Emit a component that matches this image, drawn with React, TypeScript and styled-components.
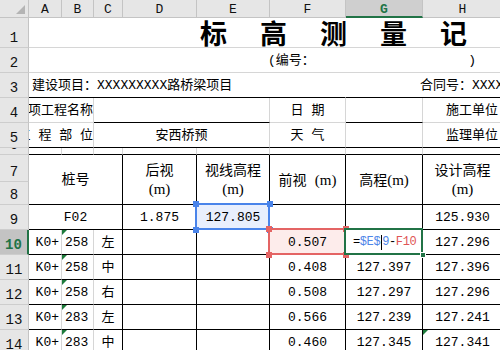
import React from 'react';
import styled, { createGlobalStyle, css } from 'styled-components';

const Global = createGlobalStyle`
  html, body { margin: 0; padding: 0; background: #fff; overflow: hidden; }
  body { width: 500px; height: 350px; }
`;

const GRID = '#d6d6d6';
const HEAD_BG = '#e6e6e6';
const HEAD_LINE = '#c4c4c4';
const XL_GREEN = '#217346';
const SEL_BLUE = '#4a84ea';
const SEL_RED = '#e46464';

type Line = 'k' | 'g' | 'n';
type Sel = 'blue' | 'red' | 'green';
const lineColor = (l?: Line) => (l === 'k' ? '#000' : l === 'n' ? 'transparent' : GRID);
const selColor = (s: Sel) => (s === 'blue' ? SEL_BLUE : s === 'red' ? SEL_RED : XL_GREEN);
const selBg = (s: Sel) => (s === 'blue' ? '#e9effd' : s === 'red' ? '#fdeceb' : '#fff');

const Sheet = styled.div`
  display: grid;
  grid-template-columns: 29px 33px 32px 29px 74px 73px 76px 77px 80px;
  grid-template-rows: 18px 30px 25px 25px 25px 25px 7px 27px 23px repeat(6, 25px);
  width: 500px;
  height: 350px;
  overflow: hidden;
  font-family: "Liberation Mono", "Noto Sans CJK SC", monospace;
  color: #000;
`;

const Corner = styled.div`
  grid-column: 1;
  grid-row: 1;
  background: ${HEAD_BG};
  border-right: 1px solid ${HEAD_LINE};
  border-bottom: 1px solid ${HEAD_LINE};
  box-sizing: border-box;
  position: relative;
  &::after {
    content: '';
    position: absolute;
    right: 3px;
    bottom: 3px;
    border-left: 9px solid transparent;
    border-bottom: 9px solid #b4b4b4;
  }
`;

const ColHead = styled.div<{ $c: number; $active?: boolean }>`
  grid-column: ${p => p.$c};
  grid-row: 1;
  box-sizing: border-box;
  background: ${p => (p.$active ? '#cfcfcf' : HEAD_BG)};
  border-right: 1px solid ${HEAD_LINE};
  border-bottom: ${p => (p.$active ? `2px solid ${XL_GREEN}` : `1px solid ${HEAD_LINE}`)};
  color: ${p => (p.$active ? XL_GREEN : '#111')};
  font-weight: ${p => (p.$active ? 700 : 400)};
  font-family: "Liberation Mono", monospace;
  font-size: 13px;
  display: flex;
  align-items: center;
  justify-content: center;
  padding-top: 2px;
`;

const RowHead = styled.div<{ $r: number; $active?: boolean }>`
  grid-column: 1;
  grid-row: ${p => p.$r};
  box-sizing: border-box;
  background: ${p => (p.$active ? '#c3c3c3' : HEAD_BG)};
  border-bottom: 1px solid #cdcdcd;
  border-right: ${p => (p.$active ? `2px solid ${XL_GREEN}` : `1px solid ${HEAD_LINE}`)};
  color: ${p => (p.$active ? XL_GREEN : '#111')};
  font-weight: ${p => (p.$active ? 700 : 400)};
  font-family: "Liberation Mono", monospace;
  font-size: 14px;
  line-height: 1;
  display: flex;
  align-items: flex-end;
  justify-content: center;
  padding-bottom: 2px;
  overflow: hidden;
`;

const Cell = styled.div<{
  $c: string;
  $r: string;
  $br?: Line;
  $bb?: Line;
  $al?: 'left' | 'center' | 'right';
  $fs?: number;
  $pl?: number;
  $pr?: number;
  $sel?: Sel;
  $col?: boolean;
}>`
  grid-column: ${p => p.$c};
  grid-row: ${p => p.$r};
  box-sizing: border-box;
  border-right: 1px solid ${p => lineColor(p.$br)};
  border-bottom: 1px solid ${p => lineColor(p.$bb)};
  display: flex;
  flex-direction: ${p => (p.$col ? 'column' : 'row')};
  align-items: center;
  justify-content: ${p => (p.$al === 'left' ? 'flex-start' : p.$al === 'right' ? 'flex-end' : 'center')};
  padding: ${p => (p.$col ? 2 : 0)}px ${p => p.$pr ?? 0}px 0 ${p => p.$pl ?? 0}px;
  font-size: ${p => p.$fs ?? 13}px;
  line-height: ${p => (p.$col ? '18px' : '1')};
  white-space: nowrap;
  overflow: hidden;
  position: relative;
  min-width: 0;
  ${p =>
    p.$sel &&
    css`
      overflow: visible;
      z-index: ${p.$sel === 'green' ? 3 : 2};
      background: ${selBg(p.$sel)};
      &::after {
        content: '';
        position: absolute;
        top: -2px;
        left: -2px;
        right: -1px;
        bottom: -1px;
        border: 2px solid ${selColor(p.$sel)};
        pointer-events: none;
      }
    `}
`;

const Title = styled.span`
  font-family: "Noto Sans CJK SC", sans-serif;
  font-size: 27px;
  font-weight: 700;
  letter-spacing: 33px;
`;

const Unit = styled.span`
  font-family: "Liberation Serif", serif;
  font-size: 15px;
`;

const TextMark = styled.span`
  position: absolute;
  top: 0;
  left: 0;
  border-top: 5px solid #1d7b3b;
  border-right: 5px solid transparent;
`;

const Handle = styled.span<{ $color: string; $v: 'top' | 'bottom'; $h: 'left' | 'right' }>`
  position: absolute;
  width: 6px;
  height: 6px;
  background: ${p => p.$color};
  ${p => p.$v}: -4px;
  ${p => p.$h}: -4px;
  z-index: 5;
`;

const FillHandle = styled.span`
  position: absolute;
  right: -4px;
  bottom: -4px;
  width: 6px;
  height: 6px;
  background: ${XL_GREEN};
  border: 1px solid #fff;
  box-sizing: border-box;
  z-index: 6;
`;

const Formula = styled.span`
  font-size: 12px;
  letter-spacing: -0.4px;
  display: flex;
  align-items: center;
`;

const AbsRef = styled.span`
  color: #4f86e8;
`;

const RelRef = styled.span`
  color: #e05555;
`;

const Caret = styled.span`
  display: inline-block;
  width: 1px;
  height: 15px;
  margin: 0 0.5px;
  background: #000;
`;

const Corners: React.FC<{ color: string }> = ({ color }) => (
  <>
    <Handle $color={color} $v="top" $h="left" />
    <Handle $color={color} $v="top" $h="right" />
    <Handle $color={color} $v="bottom" $h="left" />
    <Handle $color={color} $v="bottom" $h="right" />
  </>
);

const COLS = ['A', 'B', 'C', 'D', 'E', 'F', 'G', 'H'];
const ROWS = [1, 2, 3, 4, 5, 6, 7, 8, 9, 10, 11, 12, 13, 14];

const DATA = [
  { r: 11, k: '258', side: '左', f: '0.507', g: '', h: '127.296' },
  { r: 12, k: '258', side: '中', f: '0.408', g: '127.397', h: '127.396' },
  { r: 13, k: '258', side: '右', f: '0.508', g: '127.297', h: '127.296' },
  { r: 14, k: '283', side: '左', f: '0.566', g: '127.239', h: '127.241' },
  { r: 15, k: '283', side: '中', f: '0.460', g: '127.345', h: '127.341' },
];

const HEADERS: { c: string; lines: React.ReactNode[] }[] = [
  { c: '5', lines: ['后视', <Unit key="u">(m)</Unit>] },
  { c: '6', lines: ['视线高程', <Unit key="u">(m)</Unit>] },
  { c: '7', lines: [<span key="a">前视 <Unit>(m)</Unit></span>] },
  { c: '8', lines: [<span key="a">高程<Unit>(m)</Unit></span>] },
  { c: '9', lines: ['设计高程', <Unit key="u">(m)</Unit>] },
];

export default function App() {
  return (
    <>
      <Global />
      <Sheet>
        <Corner />
        {COLS.map((c, i) => (
          <ColHead key={c} $c={i + 2} $active={c === 'G'}>
            {c}
          </ColHead>
        ))}
        {ROWS.map(r => (
          <RowHead key={r} $r={r + 1} $active={r === 10}>
            {r}
          </RowHead>
        ))}

        {/* Row 1: title */}
        <Cell $c="2 / -1" $r="2" $br="n" $al="left" $pl={171}>
          <Title>标高测量记录表</Title>
        </Cell>

        {/* Row 2 */}
        <Cell $c="2 / -1" $r="3" $br="n" $al="left" $pl={239} $pr={26} style={{ justifyContent: 'space-between' }}>
          <span>(编号：</span>
          <span>)</span>
        </Cell>

        {/* Row 3 */}
        <Cell $c="2 / 8" $r="4" $br="n" $bb="k" $al="left" $pl={3}>
          建设项目：XXXXXXXXX路桥梁项目
        </Cell>
        <Cell $c="8 / -1" $r="4" $br="n" $bb="k" $al="left" $pl={74}>
          合同号：XXXXXXXX
        </Cell>

        {/* Row 4 */}
        <Cell $c="2 / 4" $r="5" $al="right">分项工程名称</Cell>
        <Cell $c="4 / 7" $r="5" $bb="k" />
        <Cell $c="7" $r="5">日 期</Cell>
        <Cell $c="8" $r="5" $bb="k" />
        <Cell $c="9" $r="5" $br="n" $al="right" $pr={4}>施工单位</Cell>

        {/* Row 5 */}
        <Cell $c="2 / 4" $r="6" $bb="k" $al="right">工 程 部 位</Cell>
        <Cell $c="4 / 7" $r="6" $bb="k">安西桥预</Cell>
        <Cell $c="7" $r="6" $bb="k">天 气</Cell>
        <Cell $c="8" $r="6" $bb="k" />
        <Cell $c="9" $r="6" $br="n" $bb="k" $al="right" $pr={4}>监理单位</Cell>

        {/* Row 6 */}
        {COLS.map((c, i) => (
          <Cell key={c} $c={String(i + 2)} $r="7" $bb="k" />
        ))}

        {/* Rows 7-8 headers */}
        <Cell $c="2 / 5" $r="8 / 10" $br="k" $bb="k" $fs={14}>桩号</Cell>
        {HEADERS.map(h => (
          <Cell key={h.c} $c={h.c} $r="8 / 10" $br="k" $bb="k" $fs={14} $col>
            {h.lines.map((l, i) => (
              <span key={i}>{l}</span>
            ))}
          </Cell>
        ))}

        {/* Row 9 */}
        <Cell $c="2 / 5" $r="10" $br="k" $bb="k">F02</Cell>
        <Cell $c="5" $r="10" $br="k" $bb="k">1.875</Cell>
        <Cell $c="6" $r="10" $br="k" $bb="k" $sel="blue">
          127.805
          <Corners color={SEL_BLUE} />
        </Cell>
        <Cell $c="7" $r="10" $br="k" $bb="k" />
        <Cell $c="8" $r="10" $br="k" $bb="k" />
        <Cell $c="9" $r="10" $br="k" $bb="k">125.930</Cell>

        {/* Data rows */}
        {DATA.map(d => {
          const r = String(d.r);
          const first = d.r === 11;
          return (
            <React.Fragment key={r}>
              <Cell $c="2" $r={r} $bb="k" $al="right" $pr={2}>K0+</Cell>
              <Cell $c="3" $r={r} $bb="k" $al="left" $pl={3}>
                <TextMark />
                {d.k}
              </Cell>
              <Cell $c="4" $r={r} $br="k" $bb="k">{d.side}</Cell>
              <Cell $c="5" $r={r} $br="k" $bb="k" />
              <Cell $c="6" $r={r} $br="k" $bb="k" />
              {first ? (
                <Cell $c="7" $r={r} $br="k" $bb="k" $sel="red">
                  {d.f}
                  <Corners color={SEL_RED} />
                </Cell>
              ) : (
                <Cell $c="7" $r={r} $br="k" $bb="k">{d.f}</Cell>
              )}
              {first ? (
                <Cell $c="8" $r={r} $br="k" $bb="k" $al="left" $pl={7} $sel="green">
                  <Formula>
                    <span>=</span>
                    <AbsRef>$E$</AbsRef>
                    <Caret />
                    <AbsRef>9</AbsRef>
                    <span>-</span>
                    <RelRef>F10</RelRef>
                  </Formula>
                  <FillHandle />
                </Cell>
              ) : (
                <Cell $c="8" $r={r} $br="k" $bb="k">{d.g}</Cell>
              )}
              <Cell $c="9" $r={r} $br="k" $bb="k">
                {d.r === 15 && <TextMark />}
                {d.h}
              </Cell>
            </React.Fragment>
          );
        })}
      </Sheet>
    </>
  );
}
